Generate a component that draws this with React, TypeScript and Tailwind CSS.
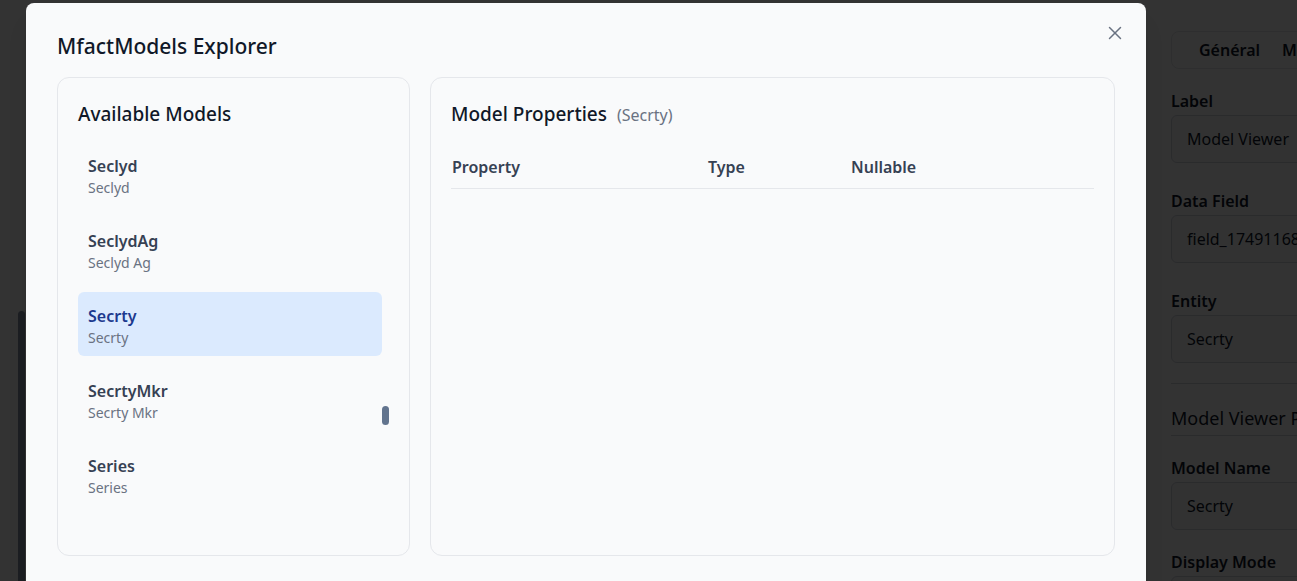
import React from "react";
import { X } from "lucide-react";

const models = [
  { name: "Seclyd", label: "Seclyd" },
  { name: "SeclydAg", label: "Seclyd Ag" },
  { name: "Secrty", label: "Secrty" },
  { name: "SecrtyMkr", label: "Secrty Mkr" },
  { name: "Series", label: "Series" },
];

function Field({ label, value, last }: { label: string; value: string; last?: boolean }) {
  return (
    <div className={last ? "mb-[20px]" : "mb-[26px]"}>
      <div className="text-[16px] font-semibold leading-[24px] text-gray-900">{label}</div>
      <div className="mt-[2px] h-[48px] w-[300px] rounded-md border border-gray-300 bg-gray-50 px-[15px] text-[16px] leading-[46px] text-gray-900">
        {value}
      </div>
    </div>
  );
}

/* page behind the dialog: a settings panel at the right edge */
function BackgroundPage() {
  return (
    <div className="flex h-full w-full bg-white">
      <div className="w-[1150px] shrink-0 pl-[18px]">
        <div className="mt-[311px] h-[300px] w-[7px] rounded-t-full bg-[#8a95a8]" />
      </div>
      <div className="w-[400px] shrink-0 pl-[21px] pt-[31px]">
        <div className="flex h-[38px] w-[300px] items-center gap-[22px] rounded-lg border border-gray-200 px-[27px] text-[16px] font-semibold text-gray-900">
          <span>Général</span>
          <span>Modèle</span>
        </div>
        <div className="mt-[20px]">
          <Field label="Label" value="Model Viewer" />
          <Field label="Data Field" value="field_1749116842" />
          <Field label="Entity" value="Secrty" last />
        </div>
        <div className="border-y border-gray-300 pb-[3px] pt-[20px] text-[18px] leading-[28px] text-gray-900">Model Viewer Properties</div>
        <div className="mt-[20px]">
          <Field label="Model Name" value="Secrty" last />
          <Field label="Display Mode" value="Table" />
        </div>
      </div>
    </div>
  );
}

function ModelList() {
  return (
    <div className="flex h-[479px] w-[353px] shrink-0 flex-col rounded-xl border border-gray-200 px-[20px] pt-[22px]">
      <div className="text-[19px] font-medium leading-[28px] text-gray-900">Available Models</div>
      <div className="mt-[14px] flex">
        <div className="flex w-[304px] flex-col gap-[11px]">
          {models.map((m) => (
            <div
              key={m.name}
              className={`rounded-md px-[10px] pb-[8px] pt-[12px] ${m.name === "Secrty" ? "bg-blue-100" : ""}`}
            >
              <div className={`text-[16px] font-semibold leading-[24px] ${m.name === "Secrty" ? "text-blue-900" : "text-gray-700"}`}>
                {m.name}
              </div>
              <div className="text-[14px] leading-[20px] text-gray-500">{m.label}</div>
            </div>
          ))}
        </div>
        <div className="w-[7px]">
          <div className="mt-[264px] h-[19px] w-[7px] rounded-full bg-slate-500" />
        </div>
      </div>
    </div>
  );
}

function PropertiesPanel() {
  return (
    <div className="h-[479px] flex-1 rounded-xl border border-gray-200 px-[20px] pt-[22px]">
      <div className="flex items-baseline gap-[10px] leading-[28px]">
        <span className="text-[19px] font-medium text-gray-900">Model Properties</span>
        <span className="text-[16px] text-gray-500">(Secrty)</span>
      </div>
      <div className="mt-[17px] grid grid-cols-[256px_143px_1fr] border-b border-gray-200 pb-[9px] pl-[1px] pt-[9px] text-[16px] font-semibold leading-[24px] text-gray-700">
        <div>Property</div>
        <div>Type</div>
        <div>Nullable</div>
      </div>
    </div>
  );
}

export default function App() {
  return (
    <div className="relative h-[581px] w-full overflow-hidden font-['Segoe_UI','Noto_Sans',sans-serif]">
      <BackgroundPage />
      <div className="absolute inset-0 bg-black/80" />
      <div className="absolute left-[26px] top-[3px] h-[620px] w-[1120px] rounded-lg bg-gray-50 px-[31px] pt-[29px] shadow-xl">
        <button className="absolute right-[20px] top-[19px] text-gray-500">
          <X size={22} strokeWidth={1.6} />
        </button>
        <h2 className="text-[21px] font-medium leading-[28px] text-gray-900">MfactModels Explorer</h2>
        <div className="mt-[17px] flex gap-[20px]">
          <ModelList />
          <PropertiesPanel />
        </div>
      </div>
    </div>
  );
}
